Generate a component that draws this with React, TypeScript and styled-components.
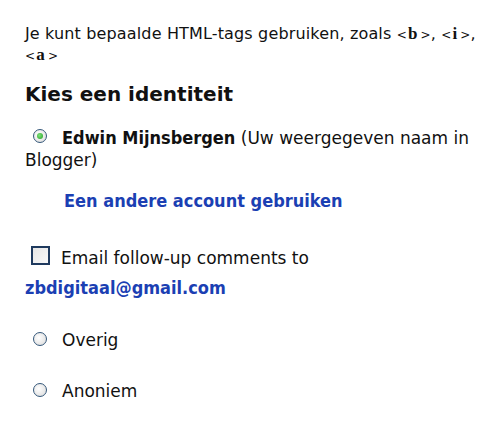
import React from "react";
import styled, { createGlobalStyle } from "styled-components";

const Global = createGlobalStyle`
  html, body { margin: 0; padding: 0; background: #ffffff; }
  body { font-family: "DejaVu Sans", Verdana, sans-serif; color: #111; }
`;

const Page = styled.div`
  width: 500px;
  height: 439px;
  box-sizing: border-box;
  padding: 24px 0 0 25px;
  background: #fff;
  overflow: hidden;
`;

const Hint = styled.p`
  margin: 0;
  font-size: 16px;
  line-height: 19px;
  letter-spacing: 0.15px;
  color: #111;
  width: 465px;
`;

const Bracket = styled.span`
  font-size: 12px;
`;

const TagLetter = styled.b`
  font-family: "Liberation Serif", "Times New Roman", serif;
  font-weight: bold;
  font-size: 17px;
  margin: 0 3px 0 1px;
`;

const Heading = styled.h3`
  margin: 16px 0 0 0;
  font-size: 20px;
  line-height: 24px;
  font-weight: bold;
  color: #111;
`;

const Option = styled.div<{ $top: number }>`
  margin-top: ${(p) => p.$top}px;
  font-size: 17px;
  line-height: 22px;
  color: #111;
`;

const Radio = styled.span<{ $checked?: boolean }>`
  display: inline-block;
  box-sizing: border-box;
  width: 14px;
  height: 14px;
  border-radius: 50%;
  border: 1.5px solid #35587a;
  background: radial-gradient(circle at 40% 40%, #ffffff 0%, #e4e4e4 70%, #cfcfcf 100%);
  vertical-align: ${(p) => (p.$checked ? "1px" : "0px")};
  margin: 0 15px 0 8px;
  position: relative;
  &::after {
    content: "";
    display: ${(p) => (p.$checked ? "block" : "none")};
    position: absolute;
    left: 50%;
    top: 50%;
    width: 6px;
    height: 6px;
    margin: -3px 0 0 -3px;
    border-radius: 50%;
    background: radial-gradient(circle at 40% 40%, #7ee07a, #22a022);
  }
`;

const Check = styled.span`
  display: inline-block;
  box-sizing: border-box;
  width: 19px;
  height: 19px;
  border: 2px solid #1f3a5e;
  background: linear-gradient(135deg, #e6e6e6, #f8f8f8);
  vertical-align: -1px;
  margin: 0 11px 0 6px;
`;

const Name = styled.b`
  font-family: "DejaVu Sans Condensed", "DejaVu Sans", sans-serif;
  font-stretch: condensed;
  font-weight: bold;
  font-size: 18px;
`;

const Link = styled.a`
  font-family: "DejaVu Sans Condensed", "DejaVu Sans", sans-serif;
  font-stretch: condensed;
  color: #1b3fb3;
  font-weight: bold;
  text-decoration: none;
  font-size: 18px;
`;

const LinkRow = styled.div`
  margin-top: 19px;
  padding-left: 39px;
  line-height: 22px;
`;

const EmailRow = styled.div`
  margin-top: 8px;
  line-height: 22px;
`;

export default function App() {
  return (
    <>
      <Global />
      <Page>
        <Hint>
          Je kunt bepaalde HTML-tags gebruiken, zoals <Bracket>&lt;</Bracket>
          <TagLetter>b</TagLetter>
          <Bracket>&gt;</Bracket>, <Bracket>&lt;</Bracket>
          <TagLetter>i</TagLetter>
          <Bracket>&gt;</Bracket>,{" "}
          <Bracket>&lt;</Bracket>
          <TagLetter>a</TagLetter>
          <Bracket>&gt;</Bracket>
        </Hint>
        <Heading>Kies een identiteit</Heading>
        <Option $top={21}>
          <Radio $checked />
          <Name>Edwin Mijnsbergen</Name> (Uw weergegeven naam in Blogger)
        </Option>
        <LinkRow>
          <Link href="#">Een andere account gebruiken</Link>
        </LinkRow>
        <Option $top={33}>
          <Check />
          Email follow-up comments to
        </Option>
        <EmailRow>
          <Link href="#">zbdigitaal@gmail.com</Link>
        </EmailRow>
        <Option $top={29}>
          <Radio />
          Overig
        </Option>
        <Option $top={29}>
          <Radio />
          Anoniem
        </Option>
      </Page>
    </>
  );
}
